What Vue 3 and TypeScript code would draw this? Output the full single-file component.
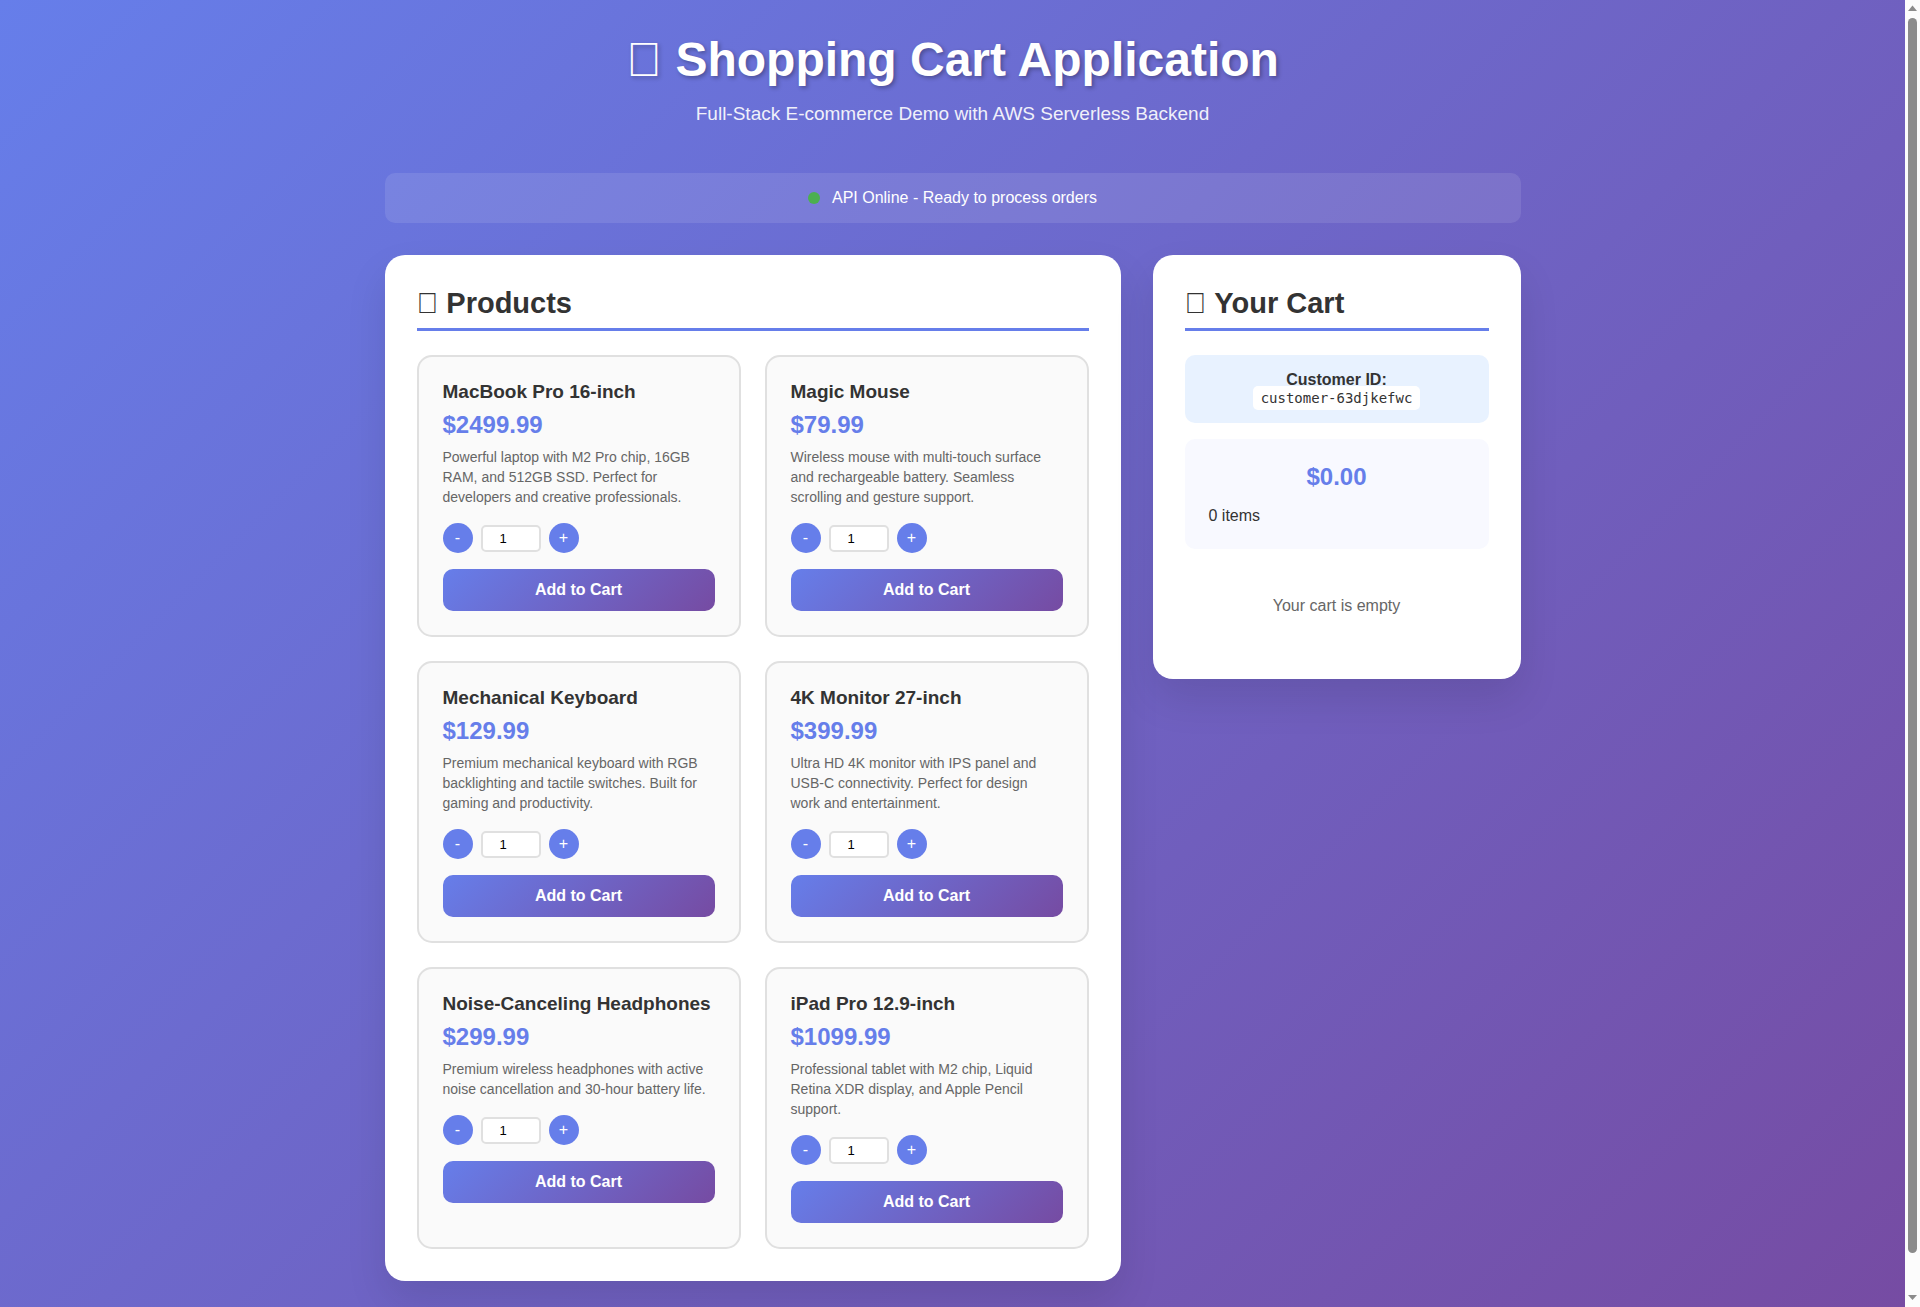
<script setup lang="ts">
import { computed, onMounted, reactive, ref } from 'vue'

interface Product {
  id: string
  name: string
  price: number
  description: string
  quantity: number
}

interface CartLine {
  id: string
  name: string
  price: number
  quantity: number
}

const customerId = 'customer-63djkefwc'

const products = reactive<Product[]>([
  {
    id: 'macbook',
    name: 'MacBook Pro 16-inch',
    price: 2499.99,
    description:
      'Powerful laptop with M2 Pro chip, 16GB RAM, and 512GB SSD. Perfect for developers and creative professionals.',
    quantity: 1,
  },
  {
    id: 'mouse',
    name: 'Magic Mouse',
    price: 79.99,
    description:
      'Wireless mouse with multi-touch surface and rechargeable battery. Seamless scrolling and gesture support.',
    quantity: 1,
  },
  {
    id: 'keyboard',
    name: 'Mechanical Keyboard',
    price: 129.99,
    description:
      'Premium mechanical keyboard with RGB backlighting and tactile switches. Built for gaming and productivity.',
    quantity: 1,
  },
  {
    id: 'monitor',
    name: '4K Monitor 27-inch',
    price: 399.99,
    description:
      'Ultra HD 4K monitor with IPS panel and USB-C connectivity. Perfect for design work and entertainment.',
    quantity: 1,
  },
  {
    id: 'headphones',
    name: 'Noise-Canceling Headphones',
    price: 299.99,
    description:
      'Premium wireless headphones with active noise cancellation and 30-hour battery life.',
    quantity: 1,
  },
  {
    id: 'ipad',
    name: 'iPad Pro 12.9-inch',
    price: 1099.99,
    description:
      'Professional tablet with M2 chip, Liquid Retina XDR display, and Apple Pencil support.',
    quantity: 1,
  },
])

const cart = ref<CartLine[]>([])

const itemCount = computed(() => cart.value.reduce((sum, line) => sum + line.quantity, 0))
const total = computed(() =>
  cart.value.reduce((sum, line) => sum + line.quantity * line.price, 0),
)

function changeQuantity(product: Product, delta: number): void {
  product.quantity = Math.max(1, product.quantity + delta)
}

function addToCart(product: Product): void {
  const line = cart.value.find((entry) => entry.id === product.id)
  if (line) {
    line.quantity += product.quantity
  } else {
    cart.value.push({
      id: product.id,
      name: product.name,
      price: product.price,
      quantity: product.quantity,
    })
  }
  product.quantity = 1
}

// The thumb mirrors how much of the page is in view and where.
const viewport = ref<HTMLElement | null>(null)
const thumbHeight = ref(97)
const thumbTop = ref(0)

function updateThumb(): void {
  const el = viewport.value
  if (!el) return
  thumbHeight.value = (el.clientHeight / el.scrollHeight) * 100
  thumbTop.value = (el.scrollTop / el.scrollHeight) * 100
}

onMounted(updateThumb)
</script>

<template>
  <div class="shell">
    <div ref="viewport" class="viewport" @scroll="updateThumb">
      <div class="page">
        <div class="container">
          <header class="header">
            <h1>&#xF07A; Shopping Cart Application</h1>
            <p>Full-Stack E-commerce Demo with AWS Serverless Backend</p>
          </header>

          <div class="status" role="status">
            <span class="status-dot"></span>
            <span>API Online - Ready to process orders</span>
          </div>

          <main class="columns">
            <section class="panel">
              <h2>&#xF10B; Products</h2>
              <div class="product-grid">
                <article v-for="product in products" :key="product.id" class="product">
                  <h3>{{ product.name }}</h3>
                  <div class="price">${{ product.price.toFixed(2) }}</div>
                  <p class="description">{{ product.description }}</p>
                  <div class="quantity">
                    <button
                      type="button"
                      class="step"
                      aria-label="Decrease quantity"
                      @click="changeQuantity(product, -1)"
                    >-</button>
                    <input
                      v-model.number="product.quantity"
                      type="number"
                      min="1"
                      :aria-label="`Quantity of ${product.name}`"
                    />
                    <button
                      type="button"
                      class="step"
                      aria-label="Increase quantity"
                      @click="changeQuantity(product, 1)"
                    >+</button>
                  </div>
                  <button type="button" class="add" @click="addToCart(product)">Add to Cart</button>
                </article>
              </div>
            </section>

            <aside class="panel">
              <h2>&#xF07A; Your Cart</h2>
              <div class="customer">
                <strong>Customer ID:</strong>
                <code>{{ customerId }}</code>
              </div>
              <div class="summary">
                <div class="total">${{ total.toFixed(2) }}</div>
                <div>{{ itemCount }} items</div>
              </div>
              <p v-if="cart.length === 0" class="empty">Your cart is empty</p>
              <ul v-else class="lines">
                <li v-for="line in cart" :key="line.id">{{ line.name }} × {{ line.quantity }}</li>
              </ul>
            </aside>
          </main>
        </div>
      </div>
    </div>

    <div class="scrollbar" aria-hidden="true">
      <svg width="15" height="18" viewBox="0 0 15 18"><path d="M3 11 7.500 5.500 12 11Z" /></svg>
      <div class="track">
        <div class="thumb" :style="{ height: `${thumbHeight}%`, marginTop: `${thumbTop}%` }"></div>
      </div>
      <svg width="15" height="18" viewBox="0 0 15 18"><path d="M3 6 12 6 7.500 11Z" /></svg>
    </div>
  </div>
</template>

<style>
body {
  margin: 0;
}
</style>

<style scoped>
.shell {
  display: flex;
  height: 100vh;
  font-family: "Liberation Sans", Arial, sans-serif;
  font-size: 16px;
  line-height: 18px;
  color: #333;
}

.viewport {
  flex: 1;
  min-width: 0;
  overflow-y: auto;
  scrollbar-width: none;
}

.page {
  min-height: 100%;
  background: linear-gradient(135deg, #667eea 0%, #764ba2 100%);
}

.scrollbar {
  display: flex;
  flex-direction: column;
  width: 15px;
  background: #fcfcfc;
}

.scrollbar svg {
  display: block;
  fill: #8b8b8b;
}

.track {
  flex: 1;
  padding: 0 3px;
}

.thumb {
  border-radius: 5px;
  background: #8b8b8b;
}

.container {
  box-sizing: border-box;
  max-width: 1200px;
  margin: 0 auto;
  padding: 32px 32px 64px;
}

.header {
  margin-bottom: 48px;
  text-align: center;
  color: #fff;
}

h1,
h2,
h3,
p {
  margin: 0;
}

h1 {
  margin-bottom: 16px;
  font-size: 48px;
  line-height: 55px;
  text-shadow: 2px 2px 4px rgba(0, 0, 0, 0.3);
}

.header p {
  font-size: 19px;
  line-height: 22px;
  opacity: 0.9;
}

.status {
  display: flex;
  align-items: center;
  justify-content: center;
  gap: 12px;
  margin-bottom: 32px;
  padding: 16px;
  border-radius: 10px;
  background: rgba(255, 255, 255, 0.1);
  color: #fff;
}

.status-dot {
  width: 12px;
  height: 12px;
  border-radius: 50%;
  background: #4caf50;
}

.columns {
  display: grid;
  grid-template-columns: 2fr 1fr;
  align-items: start;
  gap: 32px;
}

.panel {
  padding: 32px;
  border-radius: 20px;
  background: #fff;
  box-shadow: 0 20px 40px rgba(0, 0, 0, 0.1);
}

h2 {
  margin-bottom: 24px;
  padding-bottom: 8px;
  border-bottom: 3px solid #667eea;
  font-size: 29px;
  line-height: 33px;
}

.product-grid {
  display: grid;
  grid-template-columns: 1fr 1fr;
  gap: 24px;
}

.product {
  padding: 24px;
  border: 2px solid #e0e0e0;
  border-radius: 15px;
  background: #fafafa;
}

h3 {
  margin-bottom: 8px;
  font-size: 19px;
  line-height: 22px;
}

.price {
  margin-bottom: 8px;
  font-size: 24px;
  font-weight: bold;
  line-height: 28px;
  color: #667eea;
}

.description {
  margin-bottom: 16px;
  padding-right: 4px;
  font-size: 14px;
  line-height: 20px;
  color: #666;
}

.quantity {
  display: flex;
  align-items: center;
  gap: 8px;
  margin-bottom: 16px;
}

.step {
  width: 30px;
  height: 30px;
  padding: 0;
  border: none;
  border-radius: 50%;
  background: #667eea;
  color: #fff;
  font-family: inherit;
  font-size: 16px;
  cursor: pointer;
}

.quantity input {
  box-sizing: border-box;
  width: 60px;
  padding: 4px;
  border: 2px solid #e0e0e0;
  border-radius: 5px;
  background: #fff;
  color: #000;
  font-family: inherit;
  font-size: 13px;
  line-height: 15px;
  text-align: center;
}

.add {
  width: 100%;
  padding: 12px;
  border: none;
  border-radius: 10px;
  background: linear-gradient(135deg, #667eea 0%, #764ba2 100%);
  color: #fff;
  font-family: inherit;
  font-size: 16px;
  font-weight: bold;
  line-height: 18px;
  cursor: pointer;
}

.customer {
  margin-bottom: 16px;
  padding: 16px;
  border-radius: 10px;
  background: #e8f2ff;
  text-align: center;
}

.customer strong {
  display: block;
}

.customer code {
  padding: 4px 8px;
  border-radius: 5px;
  background: #fff;
  font-family: "DejaVu Sans Mono", monospace;
  font-size: 14px;
}

.summary {
  margin-bottom: 16px;
  padding: 24px;
  border-radius: 10px;
  background: #f8f9ff;
}

.total {
  margin-bottom: 16px;
  font-size: 24px;
  font-weight: bold;
  line-height: 28px;
  text-align: center;
  color: #667eea;
}

.empty {
  padding: 32px;
  text-align: center;
  color: #666;
}

.lines {
  margin: 0;
  padding: 0;
  list-style: none;
}
</style>
